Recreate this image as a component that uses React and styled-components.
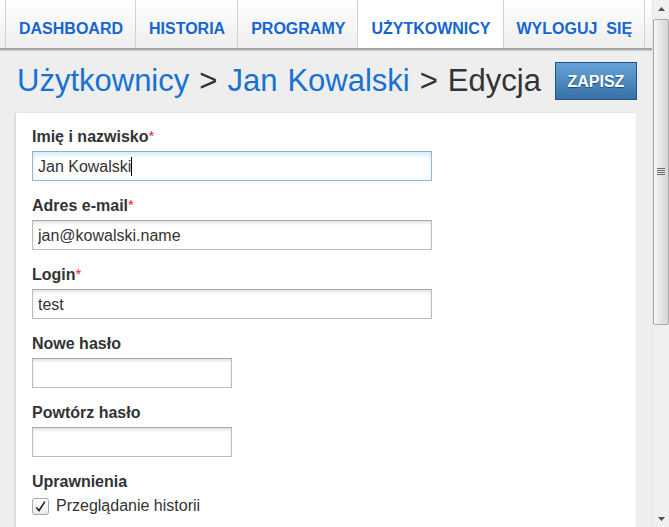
import styled, { createGlobalStyle } from 'styled-components'

const GlobalStyle = createGlobalStyle`
    body {
        margin: 0;
        background-color: #eeeeee;
        font-family: 'Liberation Sans', Arial, sans-serif;
        color: #333;
    }
`;

const Page = styled.div`
    display: flex;
    height: 100vh;
    overflow: hidden;
`;

const Main = styled.main`
    flex: 1;
    min-width: 0;
`;

const ScrollBar = styled.aside`
    width: 17px;
    display: flex;
    flex-direction: column;
    background: #f0f0f0;
    border-left: 1px solid #e4e4e4;
    box-sizing: border-box;
`;

const ArrowButton = styled.div`
    height: 17px;
    display: flex;
    align-items: center;
    justify-content: center;
`;

const Thumb = styled.div`
    height: 304px;
    margin: 2px 0 0 0;
    border: 1px solid #a9a9a9;
    border-radius: 2px;
    background: linear-gradient(to right, #f7f7f7, #e6e6e6 45%, #d6d6d6);
    display: flex;
    align-items: center;
    justify-content: center;
`;

const Track = styled.div`
    flex: 1;
`;

const Nav = styled.nav`
    display: flex;
    height: 48px;
    padding-left: 5px;
    background: linear-gradient(to bottom, #ffffff, #eeeeee);
    border-bottom: 2px solid #a4a4a4;
    box-shadow: 0 1px 1px rgba(0, 0, 0, 0.12);
`;

const Tab = styled.a`
    display: flex;
    align-items: center;
    padding: 9px 12px 0 13px;
    border-left: 1px solid #d2d2d2;
    font-size: 16px;
    font-weight: bold;
    color: #1566cf;
    text-decoration: none;
    background: ${p => (p.$active ? '#ffffff' : 'transparent')};
    white-space: pre;

    &:last-child {
        border-right: 1px solid #d2d2d2;
    }
`;

const Header = styled.div`
    display: flex;
    align-items: center;
    gap: 14px;
    margin: 12px 0 0 17px;
    height: 38px;
`;

const Title = styled.h1`
    margin: 0;
    font-size: 31px;
    font-weight: normal;
    color: #333;
    line-height: 38px;
    word-spacing: 1.4px;
`;

const Crumb = styled.span`
    color: #1772d2;
`;

const SaveButton = styled.button`
    height: 38px;
    width: 82px;
    border: 1px solid #21548a;
    background: linear-gradient(to bottom, #65a4d8, #3670a6);
    color: #fff;
    font-family: inherit;
    font-size: 16px;
    font-weight: bold;
    text-shadow: 0 1px 1px #1f4a78;
    padding: 2px 0 0;
`;

const Card = styled.form`
    width: 588px;
    margin: 13px 0 0 16px;
    padding: 15px 16px 30px;
    background: #fff;
    box-shadow: -1px 0 2px rgba(0, 0, 0, 0.12);
    min-height: 500px;
`;

const Field = styled.div`
    margin-bottom: 16px;
`;

const Label = styled.label`
    display: block;
    font-size: 16px;
    font-weight: bold;
    line-height: 18px;
    height: 18px;
    margin-bottom: 5px;
    color: #333;
`;

const Req = styled.span`
    color: #e8211a;
    font-weight: normal;
    font-size: 15px;
    line-height: 0;
    vertical-align: 1px;
`;

const InputWrap = styled.div`
    position: relative;
    width: ${p => (p.$short ? '200px' : '400px')};
`;

const Input = styled.input`
    box-sizing: border-box;
    display: block;
    width: 100%;
    height: 30px;
    padding: 1px 5px 0;
    font-family: inherit;
    font-size: 16px;
    color: #333;
    border: 1px solid ${p => (p.$focus ? '#97b6d9' : '#bdbdbd')};
    border-top-color: ${p => (p.$focus ? '#8fb0d6' : '#a8a8a8')};
    box-shadow: ${p => (p.$focus ? 'inset 0 3px 5px #d3ecf7' : 'inset 0 2px 3px #e2e2e2')};
    outline: none;
`;

const Caret = styled.span`
    position: absolute;
    left: 99px;
    top: 6px;
    width: 1px;
    height: 19px;
    background: #000;
`;

const CheckRow = styled.label`
    display: flex;
    align-items: center;
    gap: 7px;
    margin-top: 1px;
    font-size: 16px;
    line-height: 20px;
`;

const Box = styled.span`
    display: flex;
    align-items: center;
    justify-content: center;
    width: 15px;
    height: 15px;
    border: 1px solid #a8a8a8;
    border-radius: 3px;
    background: linear-gradient(to bottom, #ffffff, #ececec);
`;

const tabs = ['DASHBOARD', 'HISTORIA', 'PROGRAMY', 'UŻYTKOWNICY', 'WYLOGUJ  SIĘ'];

const Check = () => (
    <Box>
        <svg width="13" height="13" viewBox="0 0 13 13">
            <path d="M2.3 7.4 L5 10.6 L10.9 1.6" fill="none" stroke="#222" strokeWidth="1.6" />
        </svg>
    </Box>
);

const App = () => {
    return (
        <>
            <GlobalStyle />
            <Page>
                <Main>
                    <Nav>
                        {tabs.map(t => (
                            <Tab key={t} $active={t === 'UŻYTKOWNICY'}>{t}</Tab>
                        ))}
                    </Nav>
                    <Header>
                        <Title>
                            <Crumb>Użytkownicy</Crumb> &gt; <Crumb>Jan Kowalski</Crumb> &gt; Edycja
                        </Title>
                        <SaveButton type="button">ZAPISZ</SaveButton>
                    </Header>
                    <Card>
                        <Field>
                            <Label>Imię i nazwisko<Req>*</Req></Label>
                            <InputWrap>
                                <Input $focus defaultValue="Jan Kowalski" />
                                <Caret />
                            </InputWrap>
                        </Field>
                        <Field>
                            <Label>Adres e-mail<Req>*</Req></Label>
                            <InputWrap><Input defaultValue="jan@kowalski.name" /></InputWrap>
                        </Field>
                        <Field>
                            <Label>Login<Req>*</Req></Label>
                            <InputWrap><Input defaultValue="test" /></InputWrap>
                        </Field>
                        <Field>
                            <Label>Nowe hasło</Label>
                            <InputWrap $short><Input type="password" /></InputWrap>
                        </Field>
                        <Field>
                            <Label>Powtórz hasło</Label>
                            <InputWrap $short><Input type="password" /></InputWrap>
                        </Field>
                        <Field>
                            <Label>Uprawnienia</Label>
                            <CheckRow><Check />Przeglądanie historii</CheckRow>
                        </Field>
                    </Card>
                </Main>
                <ScrollBar>
                    <ArrowButton>
                        <svg width="7" height="4" viewBox="0 0 7 4"><path d="M0 4h7L3.5 0z" fill="#505050" /></svg>
                    </ArrowButton>
                    <Thumb>
                        <svg width="8" height="8" viewBox="0 0 8 8">
                            <path d="M0 .5h8M0 2.5h8M0 4.5h8M0 6.5h8" stroke="#6c6c6c" strokeWidth="1" />
                        </svg>
                    </Thumb>
                    <Track />
                    <ArrowButton>
                        <svg width="7" height="4" viewBox="0 0 7 4"><path d="M0 0h7L3.5 4z" fill="#505050" /></svg>
                    </ArrowButton>
                </ScrollBar>
            </Page>
        </>
    )
}

export default App
